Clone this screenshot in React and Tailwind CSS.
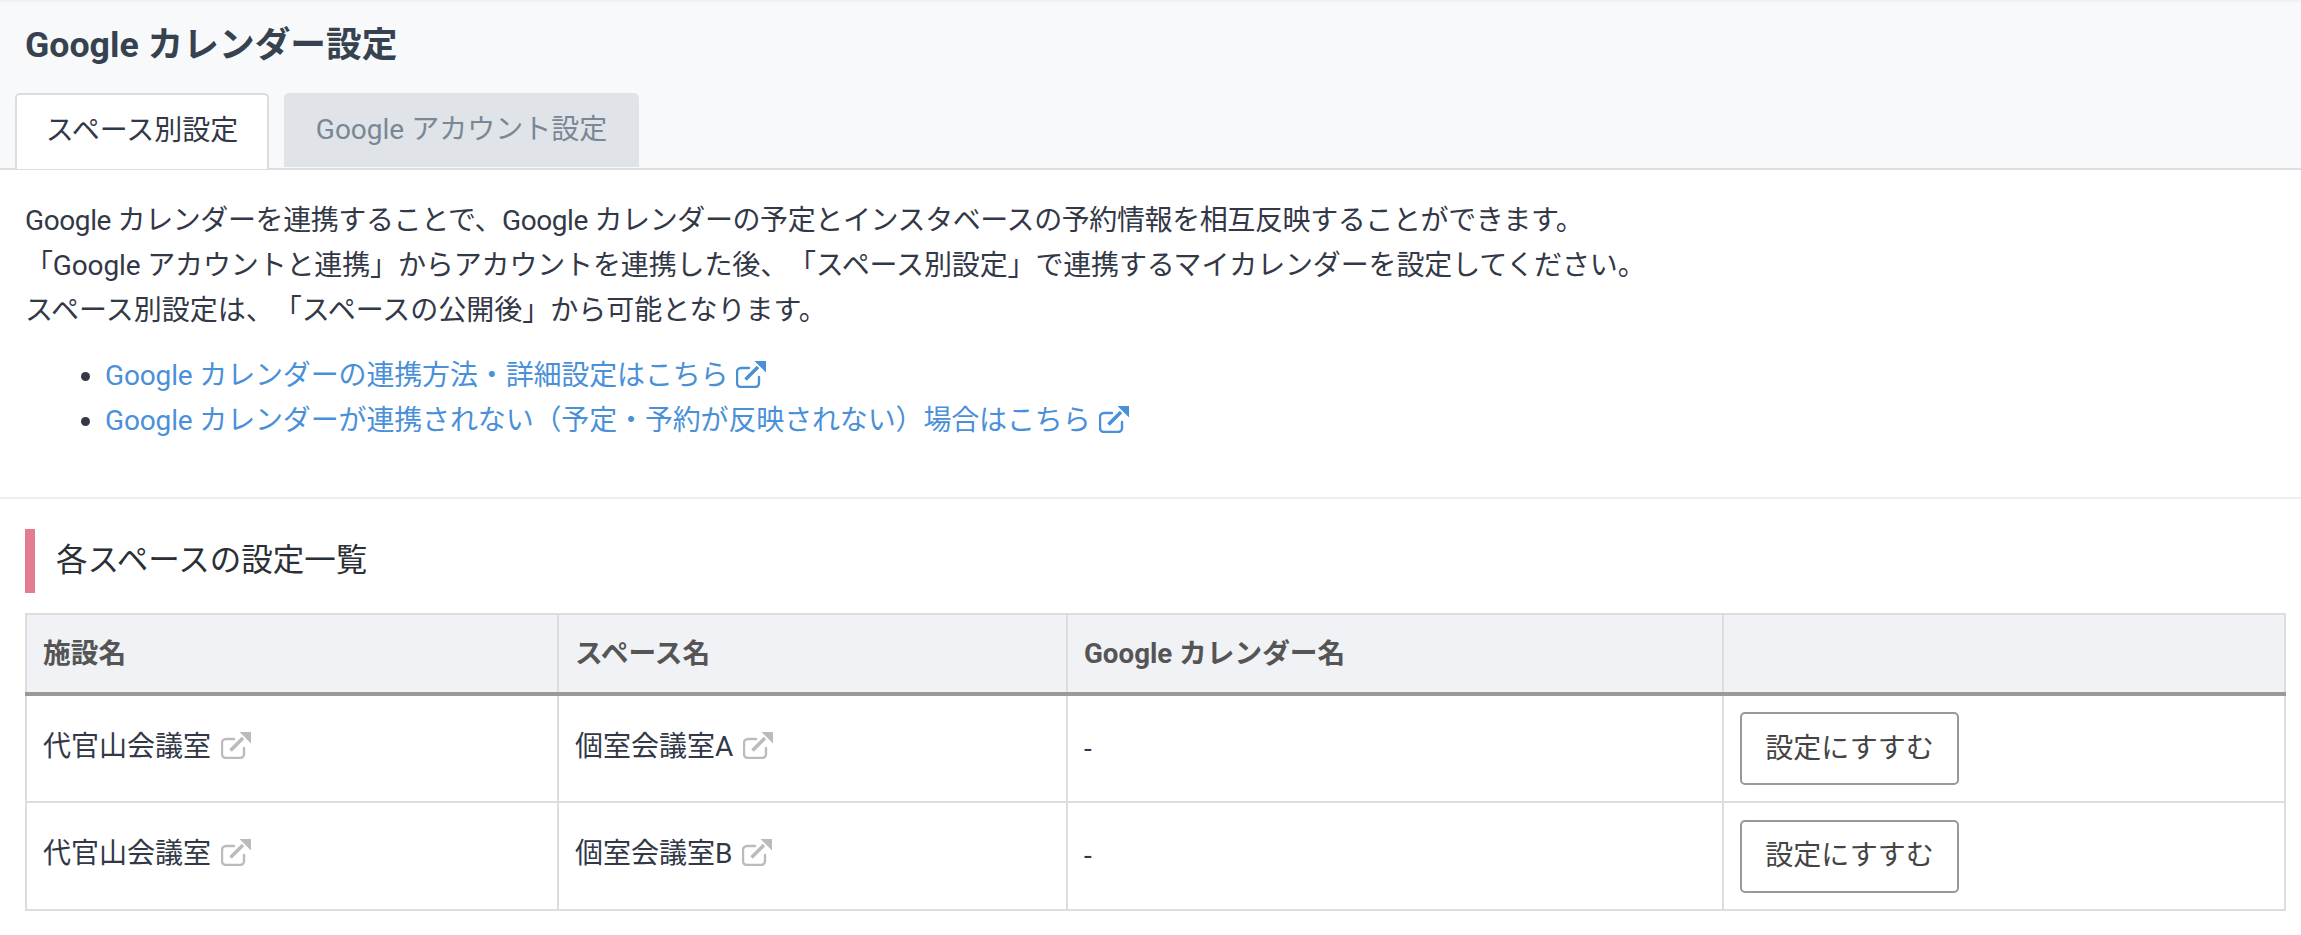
const FONT = "font-['Roboto','Noto_Sans_CJK_JP',sans-serif]";

function LinkIcon({ className }) {
  return (
    <svg viewBox="0 0 30 27" className={className} fill="none">
      <path d="M13 7H5a4 4 0 0 0-4 4v11a4 4 0 0 0 4 4h14a4 4 0 0 0 4-4v-6" stroke="currentColor" strokeWidth="2.4" strokeLinecap="round" />
      <path d="M9.5 18.5 L22 6" stroke="currentColor" strokeWidth="3.6" />
      <path d="M18.5 0H30v11.5z" fill="currentColor" />
    </svg>
  );
}

function Row({ space }) {
  return (
    <tr>
      <td className="border-2 border-[#dddddd] px-4 align-middle h-[108px] pb-[4px]">
        <span className="inline-flex items-center gap-[10px]">代官山会議室<LinkIcon className="w-[30px] h-[27px] text-[#bbbbbb] mb-[3px]" /></span>
      </td>
      <td className="border-2 border-[#dddddd] px-4 align-middle pb-[4px]">
        <span className="inline-flex items-center gap-[10px]">{space}<LinkIcon className="w-[30px] h-[27px] text-[#bbbbbb] mb-[3px]" /></span>
      </td>
      <td className="border-2 border-[#dddddd] px-4 align-middle">-</td>
      <td className="border-2 border-[#dddddd] px-4 align-middle">
        <button className="w-[219px] h-[73px] border-2 border-[#999999] rounded-[5px] bg-white text-[#444444] text-[28px]">設定にすすむ</button>
      </td>
    </tr>
  );
}

export default function App() {
  return (
    <div className={`${FONT} [text-spacing-trim:space-all] bg-white min-h-[935px] text-[#333847]`}>
      <div className="bg-[#f8f9fb] border-b-2 border-[#dddddd] h-[170px] pt-[24px] px-[15px] border-t-2 border-t-[#f1f2f4]">
        <h1 className="text-[35.7px] leading-[38px] font-bold text-[#36424f] pl-[10px]">Google カレンダー設定</h1>
        <div className="flex gap-[15px] mt-[29px] h-[74px]">
          <div className="w-[254px] h-[76px] bg-white border-2 border-b-0 border-[#dddddd] rounded-t-[5px] flex items-center justify-center text-[28px] text-[#333847] pb-[2px]">スペース別設定</div>
          <div className="w-[355px] h-[74px] bg-[#e0e4e8] rounded-t-[5px] flex items-center justify-center text-[28px] text-[#7a8794]">Google アカウント設定</div>
        </div>
      </div>
      <div className="px-[25px] pt-[28px] pb-[54px] border-b-2 border-[#eeeeee] text-[28px] leading-[45px]">
        <p className="tracking-[-0.4px]">Google カレンダーを連携することで、Google カレンダーの予定とインスタベースの予約情報を相互反映することができます。</p>
        <p className="tracking-[-0.14px]">「Google アカウントと連携」からアカウントを連携した後、「スペース別設定」で連携するマイカレンダーを設定してください。</p>
        <p>スペース別設定は、「スペースの公開後」から可能となります。</p>
        <ul className="list-disc pl-[80px] mt-[20px] text-[#4a90d9] marker:text-[#333847] tracking-[-0.15px]">
          <li><span className="inline-flex items-center gap-[8px]">Google カレンダーの連携方法・詳細設定はこちら<LinkIcon className="w-[30px] h-[27px] mb-[3px]" /></span></li>
          <li><span className="inline-flex items-center gap-[8px]">Google カレンダーが連携されない（予定・予約が反映されない）場合はこちら<LinkIcon className="w-[30px] h-[27px] mb-[3px]" /></span></li>
        </ul>
      </div>
      <div className="px-[25px] pt-[30px]">
        <h2 className="border-l-[10px] border-[#e37b92] h-[64px] pl-[21px] flex items-center text-[31.5px] font-normal text-[#2b2f36]">各スペースの設定一覧</h2>
        <table className="mt-[20px] w-[2259px] table-fixed border-collapse text-[28px]">
          <colgroup>
            <col className="w-[532px]" />
            <col className="w-[509px]" />
            <col className="w-[656px]" />
            <col className="w-[562px]" />
          </colgroup>
          <thead>
            <tr className="bg-[#f0f2f6] text-[#555555] font-bold text-left text-[27.7px]">
              <th className="border-2 border-[#dddddd] border-b-4 border-b-[#999999] h-[80px] px-4">施設名</th>
              <th className="border-2 border-[#dddddd] border-b-4 border-b-[#999999] px-4">スペース名</th>
              <th className="border-2 border-[#dddddd] border-b-4 border-b-[#999999] px-4">Google カレンダー名</th>
              <th className="border-2 border-[#dddddd] border-b-4 border-b-[#999999] px-4"></th>
            </tr>
          </thead>
          <tbody>
            <Row space="個室会議室A" />
            <Row space="個室会議室B" />
          </tbody>
        </table>
      </div>
    </div>
  );
}
